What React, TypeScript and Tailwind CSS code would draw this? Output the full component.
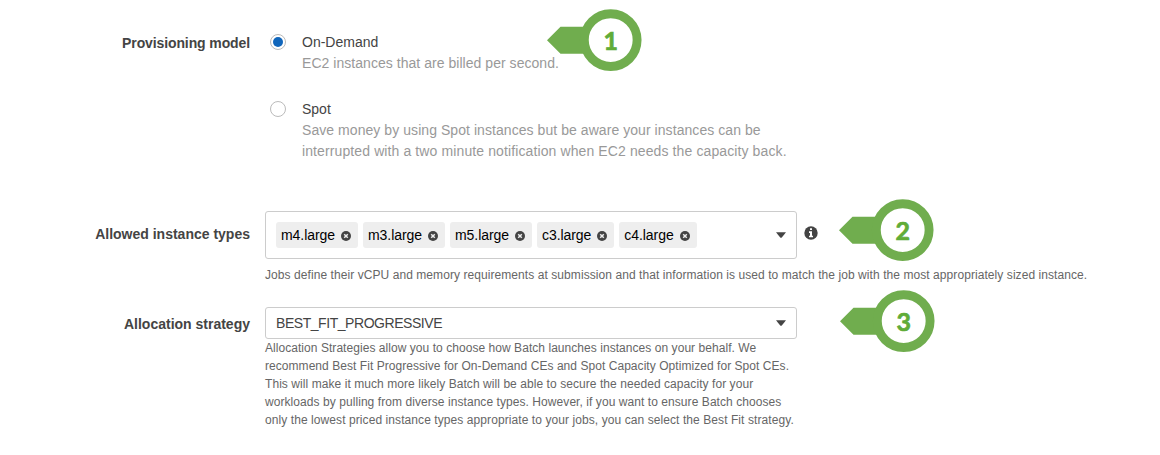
import type { ReactNode } from "react";

const instanceTypes = ["m4.large", "m3.large", "m5.large", "c3.large", "c4.large"];

export default function App() {
  return (
    <div className="relative h-[455px] w-[1160px] overflow-hidden bg-white font-['Liberation_Sans',Arial,sans-serif] text-sm leading-[21px] text-[#444]">
      <Row label="Provisioning model" className="pt-8" labelClassName="pt-px tracking-[-0.11px]">
        <div className="flex flex-col gap-[25px] pl-[5px]">
          <RadioOption title="On-Demand" checked>
            <p className="w-max tracking-[0.04px]">EC2 instances that are billed per second.</p>
          </RadioOption>
          <RadioOption title="Spot">
            <p className="w-max tracking-[0.06px]">Save money by using Spot instances but be aware your instances can be</p>
            <p className="w-max tracking-[0.11px]">interrupted with a two minute notification when EC2 needs the capacity back.</p>
          </RadioOption>
        </div>
      </Row>

      <Row label="Allowed instance types" className="pt-[49px]" labelClassName="pt-[13px]">
        <div className="flex items-center">
          <div className="flex h-12 w-[532px] items-center justify-between rounded-[3px] border border-[#ccc] px-2.5">
            <div className="flex gap-[5px]">
              {instanceTypes.map((type) => (
                <Tag key={type} label={type} />
              ))}
            </div>
            <Caret />
          </div>
          <InfoIcon />
        </div>
        <p className="mt-[7px] w-max text-xs leading-[18px] tracking-[0.07px] text-[#666]">
          Jobs define their vCPU and memory requirements at submission and that information is used to match the job with the most appropriately sized instance.
        </p>
      </Row>

      <Row label="Allocation strategy" className="pt-[23px]" labelClassName="pt-[7px]">
        <div className="flex h-8 w-[532px] items-center justify-between rounded-[3px] border border-[#ccc] px-2.5">
          <span className="tracking-[-0.45px]">BEST_FIT_PROGRESSIVE</span>
          <Caret />
        </div>
        <div className="w-max text-xs leading-[18px] tracking-[0.05px] text-[#666]">
          <p>Allocation Strategies allow you to choose how Batch launches instances on your behalf. We</p>
          <p>recommend Best Fit Progressive for On-Demand CEs and Spot Capacity Optimized for Spot CEs.</p>
          <p className="tracking-[0.065px]">This will make it much more likely Batch will be able to secure the needed capacity for your</p>
          <p className="tracking-[0.065px]">workloads by pulling from diverse instance types. However, if you want to ensure Batch chooses</p>
          <p className="tracking-[0.08px]">only the lowest priced instance types appropriate to your jobs, you can select the Best Fit strategy.</p>
        </div>
      </Row>

      <Callout number={1} className="left-[547px] top-2" />
      <Callout number={2} className="left-[839px] top-[198px]" />
      <Callout number={3} className="left-[840px] top-[289px]" />
    </div>
  );
}

interface RowProps {
  label: string;
  className: string;
  labelClassName: string;
  children: ReactNode;
}

function Row({ label, className, labelClassName, children }: RowProps) {
  return (
    <div className={`flex ${className}`}>
      <div className={`w-[250px] shrink-0 text-right font-bold ${labelClassName}`}>{label}</div>
      <div className="ml-[15px]">{children}</div>
    </div>
  );
}

function RadioOption({ title, checked = false, children }: { title: string; checked?: boolean; children: ReactNode }) {
  return (
    <div className="flex">
      <span className="mt-0.5 flex h-4 w-4 shrink-0 items-center justify-center rounded-full border border-[#bbb]">
        {checked && <span className="h-2.5 w-2.5 rounded-full bg-[#1166bb]" />}
      </span>
      <div className="ml-4">
        <p>{title}</p>
        <div className="text-[#999]">{children}</div>
      </div>
    </div>
  );
}

function Tag({ label }: { label: string }) {
  return (
    <span className="flex h-[26px] items-center rounded-[3px] bg-[#eee] pl-[5px] pr-[7px] tracking-[-0.06px] text-black">
      {label}
      <svg viewBox="0 0 10 10" className="ml-1.5 mt-0.5 h-2.5 w-2.5">
        <circle cx="5" cy="5" r="5" fill="#444" />
        <path d="M3.2 3.2 6.8 6.8M6.8 3.2 3.2 6.8" stroke="#eee" strokeWidth="1.5" />
      </svg>
    </span>
  );
}

function Caret() {
  return (
    <svg viewBox="0 0 10 6" className="h-1.5 w-2.5">
      <path d="M0 0.3h10L6 5.2q-1 1-2 0z" fill="#444" />
    </svg>
  );
}

function InfoIcon() {
  return (
    <svg viewBox="0 0 14 14" className="-mt-1 ml-[7px] h-3.5 w-3.5">
      <circle cx="7" cy="7" r="6.7" fill="#444" />
      <path d="M6 2.2h2v1.9H6zM5 5.3h3v4.4h1v1.6H5V9.7h1V6.9H5z" fill="#fff" />
    </svg>
  );
}

function Callout({ number, className }: { number: number; className: string }) {
  return (
    <svg viewBox="0 0 96 64" className={`absolute h-16 w-24 ${className}`}>
      <path d="M0 32.2 13.5 18.7H48v27H13.5z" fill="#70ad4e" />
      <circle cx="63.7" cy="32.1" r="26.4" fill="#fff" stroke="#70ad4e" strokeWidth="8.9" />
      <text
        x="63.7"
        y="41.5"
        textAnchor="middle"
        fill="#60ac38"
        stroke="#60ac38"
        strokeWidth="0.7"
        className="font-[Lato,sans-serif] text-[25px] font-bold"
      >
        {number}
      </text>
    </svg>
  );
}
